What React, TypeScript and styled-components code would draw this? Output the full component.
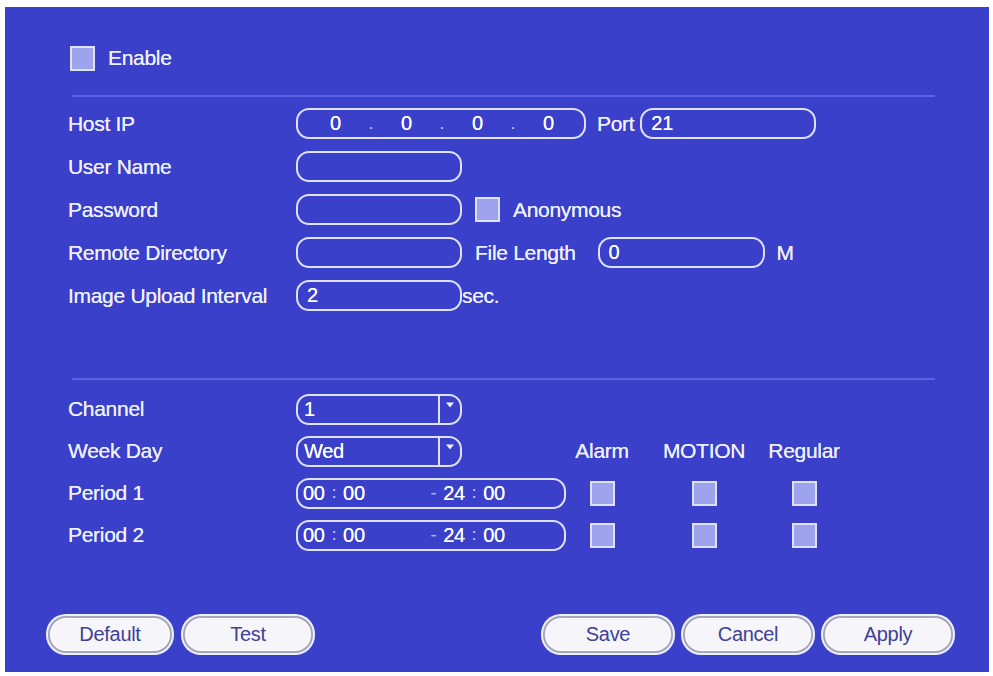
import React from 'react'
import styled, { createGlobalStyle } from 'styled-components'

const GlobalStyle = createGlobalStyle`
	html, body {
		margin: 0;
		padding: 0;
		background: #ffffff;
	}
	body {
		font-family: "Liberation Sans", Arial, sans-serif;
	}
`

const colors = {
	panel: '#3b40cb',
	line: '#5a62e3',
	text: '#eef0ff',
	stroke: '#dfe2fd',
	check: '#9ea3ee',
	dim: '#aeb3f0',
	button: '#f6f6fa',
	buttonText: '#3e4196',
}

/** A rounded input-like frame, width varies per use */
function Field({ width, children }: { width: number; children?: React.ReactNode }) {
	return <FieldBox $width={width}>{children}</FieldBox>
}

function Select({ value }: { value: string }) {
	return (
		<FieldBox $width={166}>
			<SelectValue>{value}</SelectValue>
			<SelectArrow>
				<svg width="10" height="8" viewBox="0 0 10 8">
					<path d="M1 1.5 L9 1.5 L5 6.5 Z" fill={colors.text} />
				</svg>
			</SelectArrow>
		</FieldBox>
	)
}

function Period() {
	return (
		<FieldBox $width={270}>
			<TimeGroup>
				<span>00</span>
				<Sep>:</Sep>
				<span>00</span>
			</TimeGroup>
			<TimeGroup $offset={66}>
				<Sep>-</Sep>
				<span>24</span>
				<Sep>:</Sep>
				<span>00</span>
			</TimeGroup>
		</FieldBox>
	)
}

function App() {
	return (
		<>
			<GlobalStyle />
			<Panel>
				<EnableRow>
					<Check />
					<Text>Enable</Text>
				</EnableRow>
				<Divider />

				<Section>
					<Row>
						<Label>Host IP</Label>
						<Field width={290}>
							<IpValue>
								<span>0</span><Dot>.</Dot>
								<span>0</span><Dot>.</Dot>
								<span>0</span><Dot>.</Dot>
								<span>0</span>
							</IpValue>
						</Field>
						<Text $ml={11}>Port</Text>
						<Spacer $w={6} />
						<Field width={176}><Value>21</Value></Field>
					</Row>
					<Row>
						<Label>User Name</Label>
						<Field width={166} />
					</Row>
					<Row>
						<Label>Password</Label>
						<Field width={166} />
						<Spacer $w={13} />
						<Check />
						<Text $ml={13}>Anonymous</Text>
					</Row>
					<Row>
						<Label>Remote Directory</Label>
						<Field width={166} />
						<Text $ml={13}>File Length</Text>
						<Spacer $w={22} />
						<Field width={167}><Value>0</Value></Field>
						<Text $ml={12}>M</Text>
					</Row>
					<Row>
						<Label>Image Upload Interval</Label>
						<Field width={166}><Value>2</Value></Field>
						<Text>sec.</Text>
					</Row>
				</Section>

				<Divider $mt={61} />

				<Schedule>
					<Label>Channel</Label>
					<Select value="1" />
					<span />
					<span />
					<span />

					<Label>Week Day</Label>
					<Select value="Wed" />
					<Head>Alarm</Head>
					<Head>MOTION</Head>
					<Head>Regular</Head>

					<Label>Period 1</Label>
					<Period />
					<Cell><Check /></Cell>
					<Cell><Check /></Cell>
					<Cell><Check /></Cell>

					<Label>Period 2</Label>
					<Period />
					<Cell><Check /></Cell>
					<Cell><Check /></Cell>
					<Cell><Check /></Cell>
				</Schedule>

				<Footer>
					<ButtonGroup $gap={11}>
						<Button $width={124}>Default</Button>
						<Button $width={130}>Test</Button>
					</ButtonGroup>
					<ButtonGroup $gap={10}>
						<Button $width={130}>Save</Button>
						<Button $width={130}>Cancel</Button>
						<Button $width={130}>Apply</Button>
					</ButtonGroup>
				</Footer>
			</Panel>
		</>
	)
}

export default App

//#region styles
const Panel = styled.div`
	box-sizing: border-box;
	display: flex;
	flex-direction: column;
	margin: 7px 0 0 5px;
	width: 984px;
	height: 665px;
	padding: 36px 0 0 63px;
	background: ${colors.panel};
	color: ${colors.text};
	font-size: 21px;
	letter-spacing: -0.3px;
	text-shadow: 0 0 0.6px ${colors.text};
`

const EnableRow = styled.div`
	display: flex;
	align-items: center;
	gap: 13px;
	height: 30px;
	padding-left: 2px;
`

const Divider = styled.div<{ $mt?: number }>`
	flex: none;
	width: 863px;
	height: 2px;
	margin: ${p => p.$mt ?? 22}px 0 0 4px;
	background: ${colors.line};
`

const Section = styled.div`
	display: flex;
	flex-direction: column;
	margin-top: 5px;
`

const Row = styled.div`
	display: flex;
	align-items: center;
	height: 43px;
`

const Label = styled.div`
	flex: none;
	width: 228px;
	white-space: nowrap;
`

const Text = styled.span<{ $ml?: number }>`
	margin-left: ${p => p.$ml ?? 0}px;
	white-space: nowrap;
`

const Spacer = styled.span<{ $w: number }>`
	flex: none;
	width: ${p => p.$w}px;
`

const FieldBox = styled.div<{ $width: number }>`
	box-sizing: border-box;
	flex: none;
	display: flex;
	align-items: center;
	position: relative;
	width: ${p => p.$width}px;
	height: 31px;
	border: 2.5px solid ${colors.stroke};
	border-radius: 13px;
	font-size: 20px;
	color: #ffffff;
`

const Value = styled.span`
	padding-left: 9px;
`

const IpValue = styled.div`
	display: flex;
	align-items: center;
	gap: 28px;
	padding-left: 32px;
`

const Dot = styled.span`
	color: ${colors.dim};
	font-size: 16px;
`

const SelectValue = styled.span`
	flex: 1;
	padding-left: 6px;
`

const SelectArrow = styled.span`
	display: flex;
	align-items: flex-start;
	justify-content: center;
	align-self: stretch;
	width: 20px;
	padding-top: 5px;
	border-left: 2px solid ${colors.stroke};
`

const TimeGroup = styled.span<{ $offset?: number }>`
	display: flex;
	align-items: center;
	gap: 7px;
	margin-left: ${p => p.$offset ?? 5}px;
`

const Sep = styled.span`
	color: ${colors.dim};
	font-size: 17px;
`

const Check = styled.span`
	box-sizing: border-box;
	display: inline-block;
	flex: none;
	width: 25px;
	height: 25px;
	border: 2.5px solid ${colors.stroke};
	background: ${colors.check};
`

const Schedule = styled.div`
	display: grid;
	grid-template-columns: 228px 270px 72px 132px 68px;
	grid-auto-rows: 42px;
	align-items: center;
	margin-top: 8px;
`

const Head = styled.span`
	justify-self: center;
	white-space: nowrap;
`

const Cell = styled.span`
	display: flex;
	justify-content: center;
`

const Footer = styled.div`
	display: flex;
	justify-content: space-between;
	margin: 60px 36px 0 -20px;
`

const ButtonGroup = styled.div<{ $gap: number }>`
	display: flex;
	gap: ${p => p.$gap}px;
`

const Button = styled.button<{ $width: number }>`
	box-sizing: border-box;
	width: ${p => p.$width}px;
	height: 37px;
	padding: 0;
	border: 2px solid #a4a6bd;
	border-radius: 18px;
	background: ${colors.button};
	box-shadow: 0 0 0 2px #eef0fa, inset 0 0 0 1px #ffffff;
	color: ${colors.buttonText};
	font-family: "Liberation Sans", Arial, sans-serif;
	font-size: 20px;
	letter-spacing: -0.3px;
`
//#endregion
